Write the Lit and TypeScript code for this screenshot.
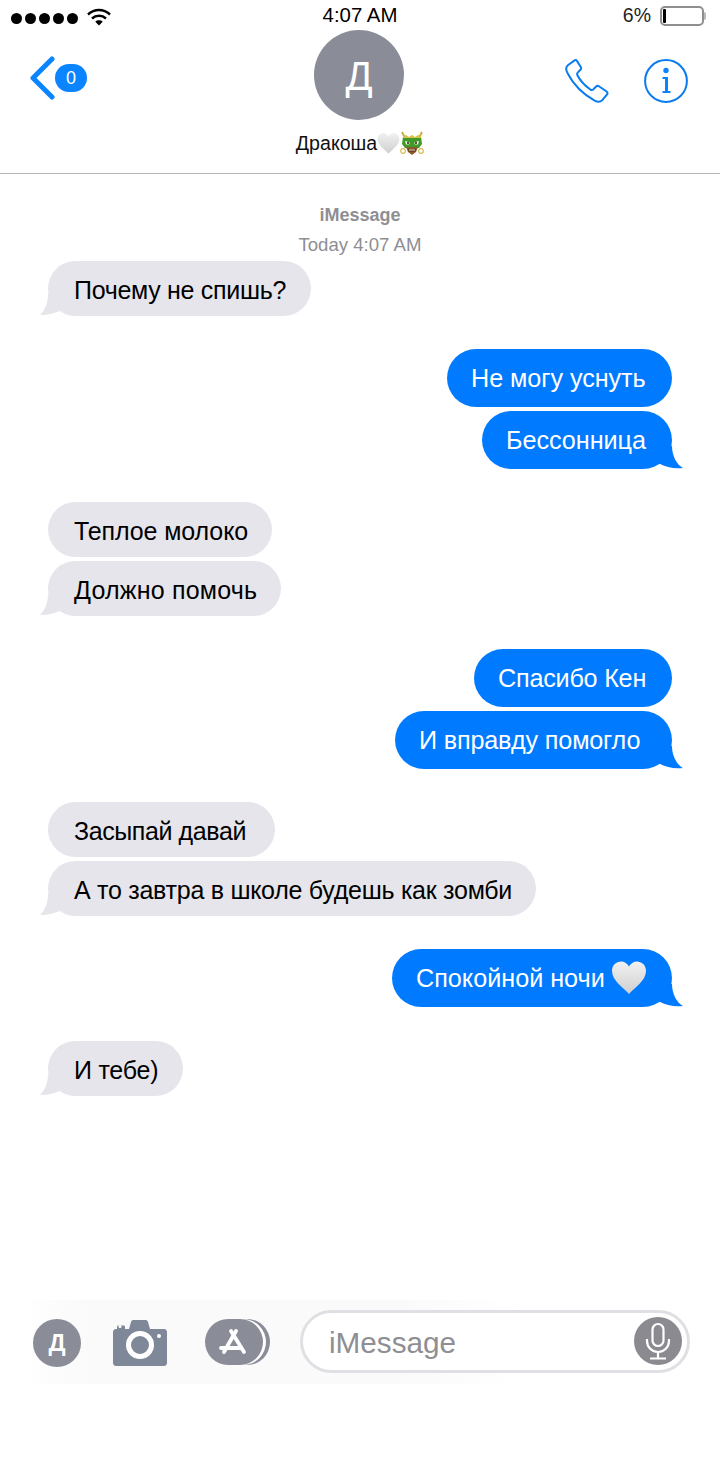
import { LitElement, html, css, svg } from "lit";
import { customElement } from "lit/decorators.js";

const heart = (size: number, id: string) => html`<svg class="heart" width=${size} height=${size} viewBox="0 0 36 36">
  <defs><linearGradient id=${id} x1="0" y1="0" x2="0" y2="1"><stop offset="0" stop-color="#f1f1f1"/><stop offset="1" stop-color="#cfcfcf"/></linearGradient></defs>
  <path d="M18 34C13 28 1 21 1 11 1 5 5.500 1.500 10 1.500c3.500 0 6.500 2 8 5 1.500-3 4.500-5 8-5C30.500 1.500 35 5 35 11c0 10-12 17-17 23z" fill="url(#${id})"/>
</svg>`;

const dragon = html`<svg width="24" height="24" viewBox="0 0 24 24">
  <path d="M2 1l3 6M22 1l-3 6" stroke="#c9a93a" stroke-width="1.800" fill="none"/>
  <circle cx="3" cy="20" r="2.300" fill="none" stroke="#d8bd55" stroke-width="1.200"/>
  <circle cx="21" cy="20" r="2.300" fill="none" stroke="#d8bd55" stroke-width="1.200"/>
  <path d="M3 6h18l1 7-3 4H5l-3-4z" fill="#3f9a2a"/>
  <path d="M3 5l3-1 3 2 3-2 3 2 3-2 3 1v2H3z" fill="#d9c04a"/>
  <path d="M6 16h12l-2 5-4 3-4-3z" fill="#8a5a2b"/>
  <path d="M8 18h8l-1 2.500H9z" fill="#5a2a18"/>
  <path d="M9 18.500h6v1H9z" fill="#f2ead0"/>
  <path d="M5 10l5 1.500-1 2H6zM19 10l-5 1.500 1 2h3z" fill="#f4f1d0"/>
  <circle cx="8" cy="12" r="1" fill="#222"/><circle cx="16" cy="12" r="1" fill="#222"/>
</svg>`;

const tailR = svg`<path d="M8 0C8 9 5 16 0 21 8 21 16 19 22 16L30 5z" fill="#e6e5eb"/>`;
const tailS = svg`<path d="M21 0C21 10 26 19 32 22 24 23 15 21.500 8 17.500L0 5z" fill="#007aff"/>`;

type Msg = { from: "r" | "s"; text: string; tail?: boolean; gap: number; w: number; heart?: boolean; ls: number };

const msgs: Msg[] = [
  { from: "r", text: "Почему не спишь?", tail: true, gap: 0, w: 263, ls: -0.3 },
  { from: "s", text: "Не могу уснуть", gap: 33, w: 225, ls: -0.05 },
  { from: "s", text: "Бессонница", tail: true, gap: 4, w: 190, ls: -0.05 },
  { from: "r", text: "Теплое молоко", gap: 33, w: 224, ls: -0.1 },
  { from: "r", text: "Должно помочь", tail: true, gap: 4, w: 233, ls: 0.2 },
  { from: "s", text: "Спасибо Кен", gap: 33, w: 198, ls: -0.22 },
  { from: "s", text: "И вправду помогло", tail: true, gap: 4, w: 277, ls: -0.17 },
  { from: "r", text: "Засыпай давай", gap: 33, w: 227, ls: -0.4 },
  { from: "r", text: "А то завтра в школе будешь как зомби", tail: true, gap: 4, w: 488, ls: -0.27 },
  { from: "s", text: "Спокойной ночи", tail: true, gap: 33, w: 280, heart: true, ls: 0 },
  { from: "r", text: "И тебе)", tail: true, gap: 34, w: 135, ls: -0.25 },
];

@customElement("app-root")
export class AppRoot extends LitElement {
  static styles = css`
    :host { display: block; width: 720px; height: 1480px; background: #fff; font-family: "Liberation Sans", Arial, sans-serif; color: #000; overflow: hidden; }
    .status { height: 30px; display: grid; grid-template-columns: 1fr auto 1fr; align-items: center; }
    .status-left { display: flex; align-items: center; gap: 9px; padding: 4px 0 0 11px; }
    .dots { display: flex; gap: 3px; padding-top: 2px; }
    .dot { width: 11px; height: 11px; border-radius: 50%; background: #000; }
    .time { font-size: 20.4px; line-height: 30px; }
    .status-right { display: flex; justify-content: flex-end; align-items: center; gap: 9px; padding: 2px 16px 0 0; font-size: 19.5px; color: #222; }
    .status-right span { margin-top: -2px; }
    .battery { width: 44px; height: 20px; box-sizing: border-box; border: 2px solid #8f8f8f; border-radius: 5px; display: flex; padding: 1px; position: relative; }
    .battery i { width: 3px; background: #000; border-radius: 1px; }
    .battery::after { content: ""; position: absolute; right: -4px; top: 4px; width: 2px; height: 8px; background: #bbb; border-radius: 0 2px 2px 0; }

    .nav { height: 144px; box-sizing: border-box; border-bottom: 1px solid #b4b4b8; display: grid; grid-template-columns: 1fr auto 1fr; }
    .back { display: flex; align-items: flex-start; padding: 26px 0 0 30px; }
    .badge { width: 32px; height: 28px; border-radius: 14px; background: #0a84ff; color: #fff; font-size: 18px; display: flex; align-items: center; justify-content: center; margin: 8px 0 0 -1px; }
    .who { display: flex; flex-direction: column; align-items: center; }
    .avatar { width: 90px; height: 90px; border-radius: 50%; background: #8a8c98; color: #fff; font-size: 40px; display: flex; align-items: center; justify-content: center; margin-right: 2px; padding-top: 2px; box-sizing: border-box; }
    .name { display: flex; align-items: center; font-size: 19.6px; height: 26px; margin-top: 10px; color: #111; }
    .actions { display: flex; justify-content: flex-end; align-items: flex-start; gap: 35px; padding: 29px 32px 0 0; }

    .chat { display: flex; flex-direction: column; height: 1126px; padding: 29px 48px 0; box-sizing: border-box; }
    .svc { text-align: center; color: #8e8e93; font-size: 18px; line-height: 24px; font-weight: 700; }
    .stamp { text-align: center; color: #8e8e93; font-size: 18.6px; line-height: 24px; margin: 6px 0 4px; }
    .row { display: flex; position: relative; }
    .row.s { justify-content: flex-end; }
    .bubble { position: relative; box-sizing: border-box; display: flex; align-items: center; white-space: nowrap; }
    .r .bubble { height: 55px; border-radius: 28px; background: #e6e5eb; color: #000; padding: 4px 0 0 26px; font-size: 25px; }
    .s .bubble { height: 58px; border-radius: 29px; background: #007aff; color: #fff; padding-left: 24px; font-size: 25.2px; }
    .tail { position: absolute; bottom: 0; }
    .r .tail { left: -8px; width: 30px; height: 22px; }
    .s .tail { right: -11px; width: 32px; height: 23px; }
    .bubble .heart { margin-left: 6px; flex: none; }

    .composer { display: flex; align-items: center; height: 84px; background: linear-gradient(90deg, #fff 3%, #fafafb 12%, #fafafb 55%, #fff 72%); }
    .apps { display: flex; align-items: center; padding-left: 33px; width: 300px; box-sizing: border-box; }
    .app-a { width: 48px; height: 48px; border-radius: 50%; background: #8a8c98; color: #fff; font-size: 24px; font-weight: 700; display: flex; align-items: center; justify-content: center; flex: none; margin-top: 2px; }
    .cam { margin-left: 32px; flex: none; margin-top: 2px; }
    .store { margin-left: 38px; flex: none; }
    .field { width: 390px; height: 63px; margin-bottom: 2px; box-sizing: border-box; border: 3px solid #e0e0e4; border-radius: 32px; background: #fff; display: flex; align-items: center; justify-content: space-between; padding: 0 5px 0 26px; font-size: 29.7px; color: #8e8e93; }
    .field span { padding-top: 4px; }
    .mic { width: 48px; height: 48px; border-radius: 50%; background: #8a8a90; display: flex; align-items: center; justify-content: center; }
  `;

  render() {
    return html`
      <div class="status">
        <div class="status-left">
          <div class="dots">${[0, 1, 2, 3, 4].map(() => html`<span class="dot"></span>`)}</div>
          <svg width="24" height="18" viewBox="0 0 24 18" fill="none" stroke="#000" stroke-width="2.400">
            <path d="M1 6.500C7.500 .5 16.500 .5 23 6.500"/><path d="M5 10.500c4-3.700 10-3.700 14 0"/>
            <path d="M12 17.500l-3.700-3.800c2-1.800 5.400-1.800 7.400 0z" fill="#000" stroke="none"/>
          </svg>
        </div>
        <div class="time">4:07 AM</div>
        <div class="status-right"><span>6%</span><div class="battery"><i></i></div></div>
      </div>
      <div class="nav">
        <div class="back">
          <svg width="26" height="44" viewBox="0 0 26 44" fill="none" stroke="#0a84ff" stroke-width="5" stroke-linecap="round" stroke-linejoin="round"><path d="M22 3L3 22l19 19"/></svg>
          <span class="badge">0</span>
        </div>
        <div class="who">
          <div class="avatar">Д</div>
          <div class="name">Дракоша${heart(23, "h1")}${dragon}</div>
        </div>
        <div class="actions">
          <svg width="44" height="44" viewBox="0 0 46 46" fill="none" stroke="#0a7cf0" stroke-width="2.100" stroke-linejoin="round">
            <path d="M10 1.500L3 6.500C.5 8.500 1 12 3 15.500 9 27 19 37 31 43.500c3 1.500 6 1.500 8-.5l5-6c.8-1 .5-2-.5-3l-8-5.500c-1-.6-2-.6-3 .3l-3 3c-.8.7-1.800.8-3 .1C21 28 16 23 13 17c-.5-1-.4-2 .3-2.800l3-3.200c.7-.8.7-1.800.2-2.700L12.500 2c-.6-1-1.600-1.200-2.500-.5z"/>
          </svg>
          <svg width="44" height="44" viewBox="0 0 44 44">
            <circle cx="22" cy="22" r="20.900" fill="none" stroke="#0a7cf0" stroke-width="2"/>
            <circle cx="22" cy="11.500" r="2.700" fill="#0a84ff"/>
            <path d="M18.500 18h5.500v14h2.500v2h-8v-2h2.500V20h-2.500z" fill="#0a84ff"/>
          </svg>
        </div>
      </div>
      <div class="chat">
        <div class="svc">iMessage</div>
        <div class="stamp">Today 4:07 AM</div>
        ${msgs.map((m) => html`
          <div class="row ${m.from}" style="margin-top:${m.gap}px">
            <div class="bubble" style="width:${m.w}px;letter-spacing:${m.ls}px">
              <span>${m.text}</span>${m.heart ? heart(36, "h2") : ""}
              ${m.tail ? (m.from === "r"
                ? html`<svg class="tail" viewBox="0 0 30 22">${tailR}</svg>`
                : html`<svg class="tail" viewBox="0 0 32 23">${tailS}</svg>`) : ""}
            </div>
          </div>`)}
      </div>
      <div class="composer">
        <div class="apps">
          <div class="app-a">Д</div>
          <svg class="cam" width="54" height="46" viewBox="0 0 54 46">
            <path d="M3 9h1V7c0-1 .5-1.500 1.500-1.500h5c1 0 1.500.5 1.500 1.500v2h4l2-7c.3-1 1-2 2-2h13c1 0 1.700 1 2 2l2 7h14c2 0 3 1.500 3 3v31c0 2-1.500 3-3 3H3c-1.500 0-3-1-3-3V12c0-1.500 1-3 3-3z" fill="#7f8898"/>
            <circle cx="27" cy="25" r="11.500" fill="none" stroke="#fff" stroke-width="5"/>
            <circle cx="46" cy="16" r="2" fill="#fff"/>
            <circle cx="7" cy="6.500" r="1.500" fill="#fff"/>
          </svg>
          <svg class="store" width="65" height="46" viewBox="0 0 65 46">
            <rect x="20" y="0" width="45" height="46" rx="23" fill="#8a8c98"/>
            <rect x="0" y="0" width="61" height="46" rx="23" fill="#fff"/>
            <rect x="0" y="0" width="58" height="46" rx="23" fill="#8a8c98"/>
            <g stroke="#fff" stroke-width="3.800" stroke-linecap="round" fill="none">
              <path d="M31 12L19 33"/><path d="M26 12l13 21"/><path d="M16 29h20"/>
            </g>
          </svg>
        </div>
        <div class="field">
          <span>iMessage</span>
          <div class="mic">
            <svg width="26" height="38" viewBox="0 0 26 38" fill="none" stroke="#fff" stroke-width="2.200">
              <rect x="7.500" y="2" width="11" height="22" rx="5.500"/>
              <path d="M2 17v2a11 11 0 0 0 22 0v-2M13 30v6M5 36.500h16"/>
            </svg>
          </div>
        </div>
      </div>
    `;
  }
}
